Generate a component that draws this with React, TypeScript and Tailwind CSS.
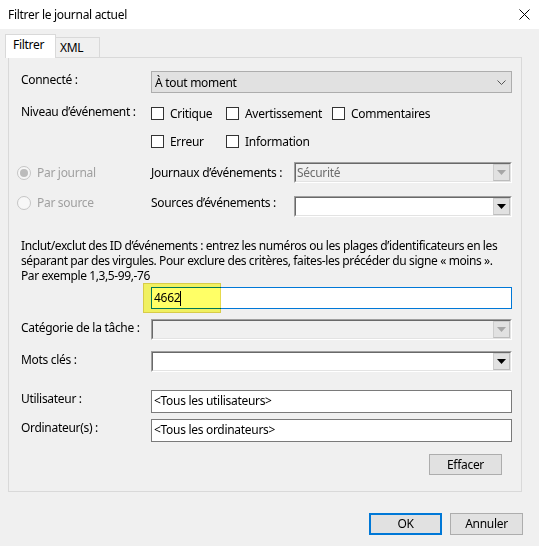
import React from "react";

const font = { fontFamily: '"Noto Sans", "Open Sans", sans-serif' };

function Checkbox({ label, w }: { label: string; w: string }) {
  return (
    <div className={`flex items-center gap-[6px] ${w}`}>
      <span className="block w-[13px] h-[13px] border border-[#333333] bg-white shrink-0" />
      <span className="leading-[15px]">{label}</span>
    </div>
  );
}

function Radio({ checked, label }: { checked?: boolean; label: string }) {
  return (
    <div className="flex items-center gap-[6px] w-[134px] ml-[-4px] leading-[15px] text-[#a0a0a0]">
      <span className="flex items-center justify-center w-[14px] h-[14px] rounded-full border border-[#c5c5c5] bg-[#f7f7f7] shrink-0">
        {checked && <span className="block w-[8px] h-[8px] rounded-full bg-[#bcbcbc]" />}
      </span>
      <span>{label}</span>
    </div>
  );
}

function OldCombo({ value, disabled, w }: { value?: string; disabled?: boolean; w: string }) {
  return (
    <div className={`${w} h-[21px] border-t border-l border-[#a0a0a0] border-b border-r border-b-white border-r-white`}>
      <div className={`flex h-full border-t border-l border-[#696969] border-b border-r border-b-[#e3e3e3] border-r-[#e3e3e3] ${disabled ? "bg-[#f0f0f0]" : "bg-white"}`}>
        <div className={`flex-1 pl-[1px] leading-[17px] ${disabled ? "text-[#6d6d6d]" : ""}`}>{value}</div>
        <div className="w-[17px] h-[17px] flex items-center justify-center bg-[#e1e1e1] border border-[#cdcdcd] border-r-[#bcbcbc] border-b-[#bcbcbc] m-0">
          <svg width="9" height="5" viewBox="0 0 9 5">
            <path d="M0 0 H9 L4.5 5 Z" fill={disabled ? "#a6a6a6" : "#000"} />
          </svg>
        </div>
      </div>
    </div>
  );
}

function TextBox({ value }: { value?: string }) {
  return (
    <div className="w-[361px] h-[23px] border border-[#7a7a7a] bg-white pl-[2px] leading-[20px]">{value}</div>
  );
}

function Label({ children }: { children: React.ReactNode }) {
  return <div className="w-[130px] leading-[15px] pt-[1px] shrink-0">{children}</div>;
}

export default function App() {
  return (
    <div className="w-[539px] h-[546px] bg-[#f0f0f0] text-[12px] tracking-[-0.3px] text-black flex flex-col overflow-hidden" style={font}>
      {/* Title bar */}
      <div className="h-[29px] bg-white flex items-center justify-between pl-[8px] pr-[9px] shrink-0">
        <span className="text-[12px]">Filtrer le journal actuel</span>
        <svg width="11" height="11" viewBox="0 0 11 11">
          <path d="M0.5 0.5 L10.5 10.5 M10.5 0.5 L0.5 10.5" stroke="#000" strokeWidth="1" />
        </svg>
      </div>

      <div className="flex flex-col pl-[8px] pr-[17px]">
        {/* Tabs */}
        <div className="flex items-end h-[28px] ml-[-3px] relative z-10">
          <div className="w-[51px] bg-white border border-[#d9d9d9] border-b-0 pl-[7px] leading-[20px] mb-[-1px] h-[24px]">Filtrer</div>
          <div className="w-[44px] h-[20px] bg-[#f0f0f0] border border-[#d9d9d9] border-l-0 border-b-0 pl-[4px] leading-[20px]">XML</div>
        </div>

        {/* Panel */}
        <div className="h-[435px] border border-[#d9d9d9] bg-[#f0f0f0] pl-[12px] pr-[9px] pt-[13px] flex flex-col">
          {/* Connecté */}
          <div className="flex items-start h-[22px]">
            <Label>Connecté :</Label>
            <div className="flex-1 h-[22px] bg-[#e1e1e1] border border-[#adadad] flex items-center justify-between pl-[3px] pr-[5px]">
              <span className="leading-[15px]">À tout moment</span>
              <svg width="9" height="5" viewBox="0 0 9 5">
                <path d="M0.5 0.5 L4.5 4.5 L8.5 0.5" stroke="#555" strokeWidth="1" fill="none" />
              </svg>
            </div>
          </div>

          {/* Niveau */}
          <div className="flex items-center h-[17px] mt-[12px]">
            <div className="w-[130px] shrink-0 leading-[15px] mt-[-4px]">Niveau d’événement :</div>
            <Checkbox label="Critique" w="w-[75px]" />
            <Checkbox label="Avertissement" w="w-[106px]" />
            <Checkbox label="Commentaires" w="w-[110px]" />
          </div>
          <div className="flex items-center h-[17px] mt-[11px]">
            <div className="w-[130px] shrink-0" />
            <Checkbox label="Erreur" w="w-[75px]" />
            <Checkbox label="Information" w="w-[106px]" />
          </div>

          {/* Par journal */}
          <div className="flex items-center h-[21px] mt-[12px]">
            <Radio checked label="Par journal" />
            <div className="w-[143px] leading-[15px] shrink-0">Journaux d’événements :</div>
            <OldCombo value="Sécurité" disabled w="w-[218px]" />
          </div>
          <div className="flex items-start h-[21px] mt-[13px]">
            <div className="mt-[-1px]">
              <Radio label="Par source" />
            </div>
            <div className="w-[143px] leading-[15px] shrink-0 mt-[-1px]">Sources d’événements :</div>
            <OldCombo w="w-[218px]" />
          </div>

          {/* Paragraph */}
          <div className="mt-[21px] whitespace-nowrap tracking-[-0.4px] flex flex-col">
            <div className="h-[15px] leading-[15px]">Inclut/exclut des ID d’événements : entrez les numéros ou les plages d’identificateurs en les</div>
            <div className="h-[15px] leading-[15px]">séparant par des virgules. Pour exclure des critères, faites-les précéder du signe « moins ».</div>
            <div className="h-[15px] leading-[15px]">Par exemple 1,3,5-99,-76</div>
          </div>

          {/* Event ID input */}
          <div className="flex mt-[4px]">
            <div className="w-[130px] shrink-0" />
            <div className="relative w-[361px] h-[22px] border border-[#0078d7] bg-white pl-[2px] leading-[20px] flex items-center">
              <span>4662</span>
              <span className="block w-[1px] h-[15px] bg-black" />
              <div className="absolute left-[-9px] top-[-5px] w-[78px] h-[30px] bg-[#ffff66] border border-[#e6d94c] mix-blend-multiply" />
            </div>
          </div>

          {/* Catégorie */}
          <div className="flex items-start mt-[10px]">
            <Label>Catégorie de la tâche :</Label>
            <OldCombo disabled w="w-[361px]" />
          </div>
          {/* Mots clés */}
          <div className="flex items-start mt-[11px]">
            <Label>Mots clés :</Label>
            <OldCombo w="w-[361px]" />
          </div>

          {/* Utilisateur */}
          <div className="flex items-start mt-[18px]">
            <Label>Utilisateur :</Label>
            <TextBox value="<Tous les utilisateurs>" />
          </div>
          <div className="flex items-start mt-[6px]">
            <Label>Ordinateur(s) :</Label>
            <TextBox value="<Tous les ordinateurs>" />
          </div>

          <div className="flex justify-end mt-[12px] pr-[10px]">
            <div className="w-[73px] h-[21px] bg-[#e1e1e1] border border-[#adadad] flex items-center justify-center">Effacer</div>
          </div>
        </div>

        {/* Bottom buttons */}
        <div className="flex justify-end gap-[8px] mt-[21px] mr-[-1px]">
          <div className="w-[73px] h-[22px] bg-[#e1e1e1] border-2 border-[#0078d7] flex items-center justify-center">OK</div>
          <div className="w-[73px] h-[22px] bg-[#e1e1e1] border border-[#adadad] flex items-center justify-center">Annuler</div>
        </div>
      </div>
    </div>
  );
}
